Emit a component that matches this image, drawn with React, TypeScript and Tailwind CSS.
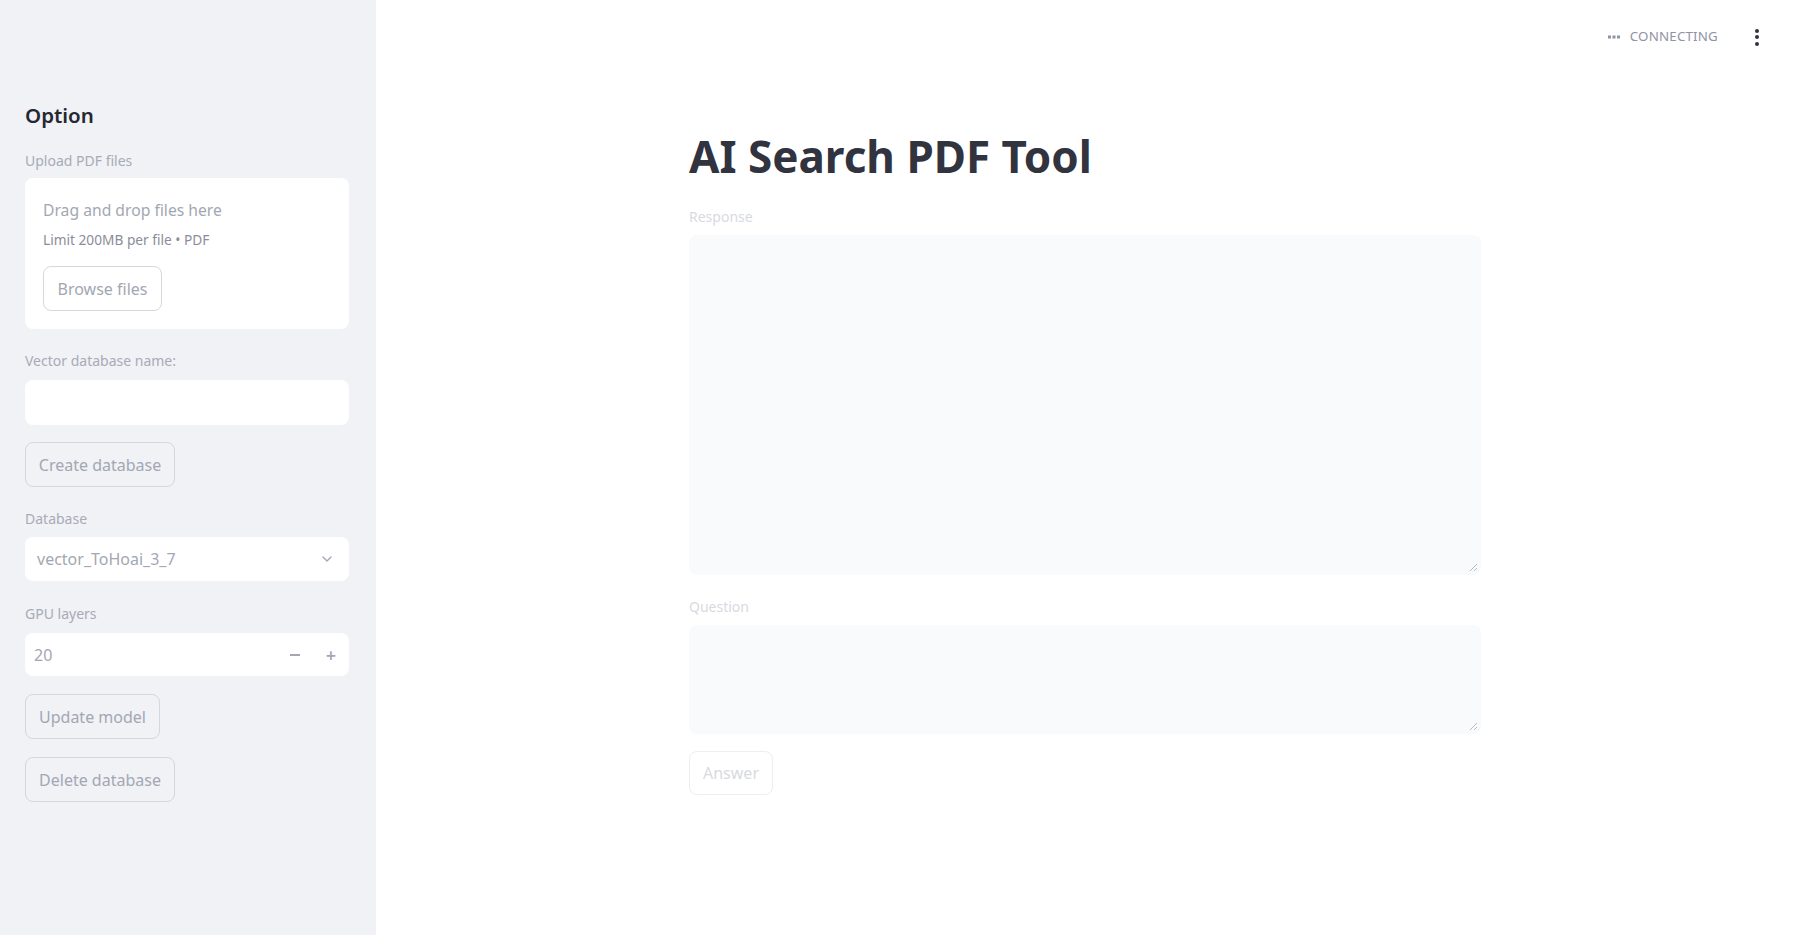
import { ChevronDown } from 'lucide-react';

const font = { fontFamily: '"Noto Sans", "Open Sans", sans-serif' };

function SideButton({ label, width }: { label: string; width: string }) {
  return (
    <button
      className={`h-[45px] ${width} rounded-lg border border-[#d6d7db] bg-transparent text-[16px] text-[#a3a7b3] flex items-center justify-center`}
    >
      {label}
    </button>
  );
}

function Label({ text }: { text: string }) {
  return <div className="h-[20px] leading-[20px] text-[14px] text-[#a7abb6]">{text}</div>;
}

export default function App() {
  return (
    <div className="flex h-[935px] w-full overflow-hidden bg-white" style={font}>
      {/* sidebar */}
      <aside className="w-[376px] shrink-0 bg-[#f0f2f6] pl-[25px] pr-[27px] pt-[100px]">
        <h2 className="h-[30px] leading-[30px] text-[20.5px] font-semibold text-[#262730]">Option</h2>

        <div className="mt-[21px]">
          <Label text="Upload PDF files" />
        </div>
        <div className="mt-[7px] h-[151px] rounded-lg bg-white pl-[18px] pt-[21px]">
          <div className="h-[22px] leading-[22px] text-[15.7px] text-[#a3a7b3]">Drag and drop files here</div>
          <div className="mt-[9px] h-[20px] leading-[20px] text-[13.7px] text-[#8a8d99]">Limit 200MB per file • PDF</div>
          <div className="mt-[16px]">
            <SideButton label="Browse files" width="w-[119px]" />
          </div>
        </div>

        <div className="mt-[22px]">
          <Label text="Vector database name:" />
        </div>
        <div className="mt-[9px] h-[45px] rounded-lg bg-white" />

        <div className="mt-[17px]">
          <SideButton label="Create database" width="w-[150px]" />
        </div>

        <div className="mt-[22px]">
          <Label text="Database" />
        </div>
        <div className="mt-[8px] flex h-[44px] items-center justify-between rounded-lg bg-white pl-[12px] pr-[14px]">
          <span className="text-[16px] text-[#a3a7b3]">vector_ToHoai_3_7</span>
          <ChevronDown size={16} strokeWidth={2} className="text-[#a3a7b3]" />
        </div>

        <div className="mt-[23px]">
          <Label text="GPU layers" />
        </div>
        <div className="mt-[9px] flex h-[43px] items-center rounded-lg bg-white pl-[9px]">
          <span className="flex-1 text-[16px] text-[#a3a7b3]">20</span>
          <span className="flex w-[36px] justify-center">
            <span className="block h-[2px] w-[10px] bg-[#a3a7b3]" />
          </span>
          <span className="flex w-[36px] justify-center text-[18px] font-semibold leading-none text-[#a3a7b3]">+</span>
        </div>

        <div className="mt-[18px]">
          <SideButton label="Update model" width="w-[135px]" />
        </div>
        <div className="mt-[18px]">
          <SideButton label="Delete database" width="w-[150px]" />
        </div>
      </aside>

      {/* main */}
      <main className="flex flex-1 flex-col">
        <header className="flex h-[74px] items-center justify-end pr-[35px]">
          <div className="flex items-center gap-[8px]">
            <svg width="12" height="4" viewBox="0 0 12 4" className="mr-[2px]">
              <rect x="0" y="0.5" width="3" height="3" fill="#8f93a6" />
              <rect x="4.5" y="0.5" width="3" height="3" fill="#8f93a6" />
              <rect x="9" y="0.5" width="3" height="3" fill="#8f93a6" />
            </svg>
            <span className="text-[13.3px] tracking-[0.2px] text-[#8f93a6]">CONNECTING</span>
          </div>
          <div className="ml-[37px] flex flex-col items-center gap-[2.5px]">
            <span className="block h-[4px] w-[4px] rounded-full bg-[#31333f]" />
            <span className="block h-[4px] w-[4px] rounded-full bg-[#31333f]" />
            <span className="block h-[4px] w-[4px] rounded-full bg-[#31333f]" />
          </div>
        </header>

        <div className="mx-auto w-[792px]">
          <h1 className="mt-[50px] h-[64px] leading-[64px] text-[44px] font-bold text-[#31333f]">AI Search PDF Tool</h1>

          <div className="mt-[19px] h-[20px] leading-[20px] text-[14px] text-[#d8dadf]">Response</div>
          <div className="relative mt-[8px] h-[340px] rounded-lg bg-[#f9fafb]">
            <Grip />
          </div>

          <div className="mt-[22px] h-[20px] leading-[20px] text-[14px] text-[#d8dadf]">Question</div>
          <div className="relative mt-[8px] h-[109px] rounded-lg bg-[#f9fafb]">
            <Grip />
          </div>

          <button className="mt-[17px] flex h-[44px] w-[84px] items-center justify-center rounded-lg border border-[#eceef1] text-[16px] text-[#d8dadf]">
            Answer
          </button>
        </div>
      </main>
    </div>
  );
}

function Grip() {
  return (
    <svg width="9" height="9" viewBox="0 0 9 9" className="absolute bottom-[3px] right-[3px]">
      <line x1="1" y1="8" x2="8" y2="1" stroke="#b8bac0" strokeWidth="1" />
      <line x1="5" y1="8" x2="8" y2="5" stroke="#b8bac0" strokeWidth="1" />
    </svg>
  );
}
